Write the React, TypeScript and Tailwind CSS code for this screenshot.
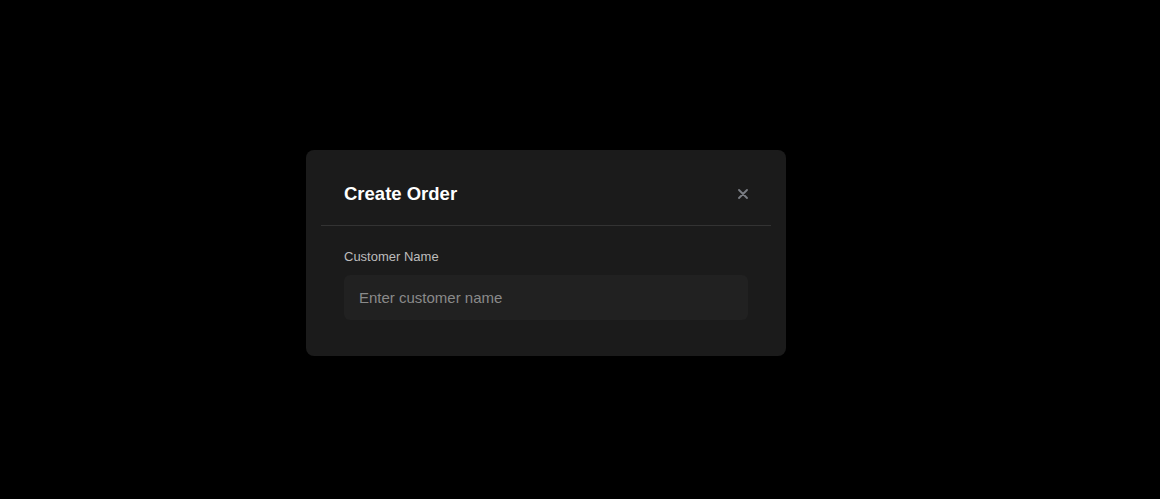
export default function App() {
  return (
    <div
      className="h-[499px] w-full bg-black pl-[306px] pt-[150px]"
      style={{ fontFamily: '"Liberation Sans", Arial, sans-serif' }}
    >
      {/* Modal */}
      <div className="w-[480px] rounded-lg bg-[#1b1b1b] px-[15px] pb-[36px]">
        <div className="flex items-center justify-between border-b border-[#333333] px-[23px] pt-[30px] pb-[17px]">
          <h2 className="text-[18.5px] leading-[28px] font-bold text-white">Create Order</h2>
          <button className="flex h-[14px] w-[14px] items-center justify-center -mr-[2px] text-[#7a7d84]">
            <svg width="10" height="10" viewBox="0 0 10 10" fill="none">
              <path d="M1 1L9 9M9 1L1 9" stroke="currentColor" strokeWidth="1.8" strokeLinecap="round" />
            </svg>
          </button>
        </div>

        <div className="px-[23px] pt-[21px]">
          <label className="mb-[8px] block text-[13px] leading-[20px] text-[#bdbdbd]">Customer Name</label>
          <input
            type="text"
            placeholder="Enter customer name"
            className="h-[45px] w-full rounded-md bg-[#212121] px-[15px] text-[15px] text-white outline-none placeholder:text-[#8a8a8a]"
          />
        </div>
      </div>
    </div>
  );
}
